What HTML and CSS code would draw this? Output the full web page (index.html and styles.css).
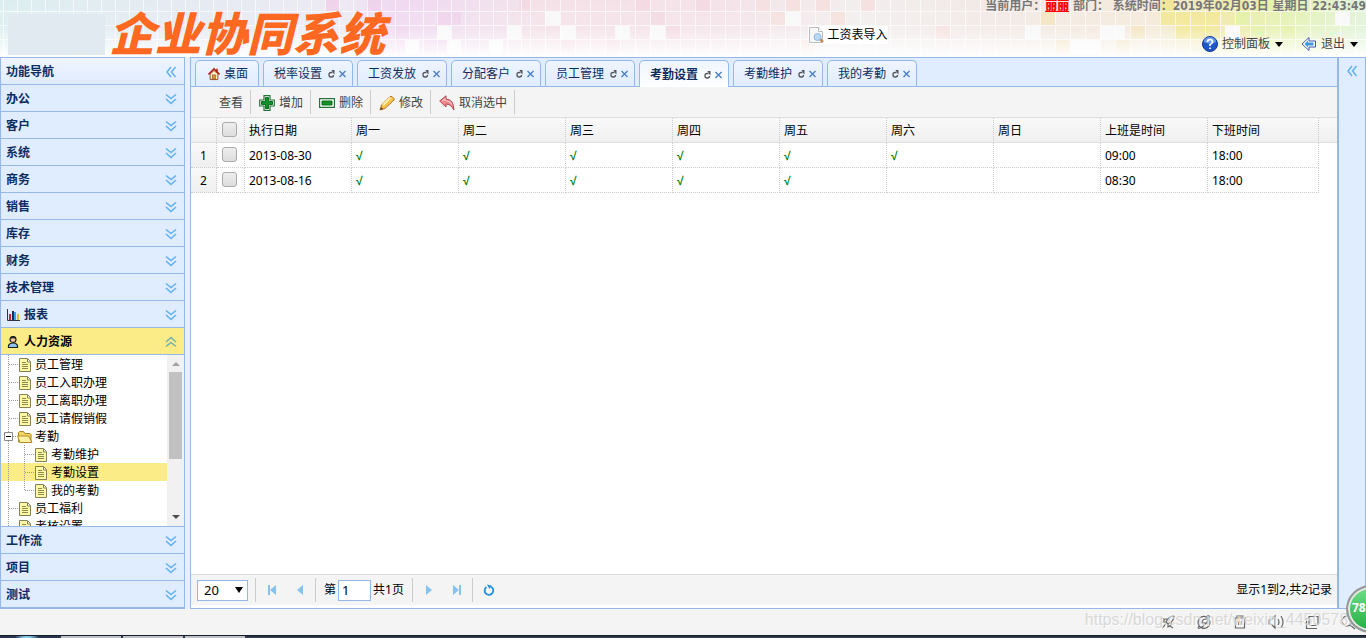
FILE: index.html
```html
<!DOCTYPE html>
<html lang="zh-CN">
<head>
<meta charset="utf-8">
<title>企业协同系统</title>
<link rel="stylesheet" href="styles.css">
</head>
<body>
<svg class="defs" aria-hidden="true">
  <symbol id="down" viewBox="0 0 12 12"><path d="M1 1.5l5 4 5-4M1 6l5 4.5L11 6" fill="none" stroke="#62b2ee" stroke-width="1.6"/></symbol>
  <symbol id="up" viewBox="0 0 12 12"><path d="M1 6l5-4.5L11 6M1 10.500l5-4 5 4" fill="none" stroke="#7ab0a8" stroke-width="1.6"/></symbol>
  <symbol id="left" viewBox="0 0 12 12"><path d="M6 1L2 6l4 5M10.500 1l-4 5 4 5" fill="none" stroke="#62b2ee" stroke-width="1.5"/></symbol>
  <symbol id="doc" viewBox="0 0 12 14"><path d="M.5.5h8l3 3v10H.5z" fill="#fff9a5" stroke="#858159"/><path d="M8.500 1v3H11" fill="#fff" stroke="#858159"/><path d="M3 4.500h4M3 6.500h6M3 8.500h6M3 10.500h6" stroke="#8a8a51"/></symbol>
  <symbol id="reload" viewBox="0 0 7 8"><path d="M4.500 2.500H3Q1 2.500 1 4.500v.5q0 2 2 2h.5q2 0 2-2" fill="none" stroke="#555" stroke-width="1.300"/><path d="M3.500 0H6.500V4.500L5.500 3.500z" fill="#555"/></symbol>
  <symbol id="close" viewBox="0 0 7 8"><path d="M.5 1l6 6M6.500 1l-6 6" stroke="#4c7fc4" stroke-width="1.4"/></symbol>
</svg>

<header class="top">
  <svg class="mosaic" width="100%" height="57" aria-hidden="true">
    <defs>
      <linearGradient id="hue"><stop offset="0" stop-color="#dceef0"/><stop offset=".15" stop-color="#e6eaf2"/><stop offset=".25" stop-color="#eceaf4"/><stop offset=".29" stop-color="#f0d8f1"/><stop offset=".36" stop-color="#f1e1ed"/><stop offset=".4" stop-color="#f4e1e7"/><stop offset=".53" stop-color="#f4e3e8"/><stop offset=".63" stop-color="#f2eeee"/><stop offset=".72" stop-color="#f2e9e6"/><stop offset=".84" stop-color="#f4e9da"/><stop offset=".9" stop-color="#eeeaa8"/><stop offset=".94" stop-color="#e5f1b0"/><stop offset="1" stop-color="#e0f3d9"/></linearGradient>
      <linearGradient id="fade" x2="0" y2="1"><stop offset="0" stop-color="#fff" stop-opacity="0"/><stop offset=".5" stop-color="#fff" stop-opacity=".15"/><stop offset="1" stop-color="#fff" stop-opacity=".95"/></linearGradient>
      <pattern id="grid" x="3" y="11" width="14" height="14" patternUnits="userSpaceOnUse"><path d="M14 .5H.5V14" fill="none" stroke="#fff" stroke-opacity=".65"/></pattern>
      <pattern id="wide" x="5" y="11" width="15" height="14" patternUnits="userSpaceOnUse"><path d="M15 .5H.5V14" fill="none" stroke="#fff" stroke-opacity=".65"/></pattern>
    </defs>
    <rect width="100%" height="57" fill="url(#hue)"/>
    <g fill="#efd3ec"><path d="M325 0h14v11h-14zM367 0h14v11h-14zM395 26h14v13h-14zM437 12h24v13h-24zM367 40h14v13h-14zM423 40h24v14h-24z"/></g>
    <g fill="#f4d9e2"><path d="M519 0h11v11h-11zM635 0h15v11h-15zM650 12h15v13h-15zM695 0h15v11h-15zM665 26h15v13h-15zM605 40h15v14h-15zM560 40h15v14h-15z"/></g>
    <g fill="#f5e1df"><path d="M755 0h15v11h-15zM785 0h15v11h-15zM830 12h15v13h-15zM860 0h15v11h-15zM815 0h15v11h-15zM770 12h15v13h-15zM935 26h15v13h-15zM800 40h15v14h-15z"/></g>
    <g fill="#f3e3c0"><path d="M1040 12h15v13h-15zM1130 26h15v13h-15zM1055 40h15v14h-15zM1115 40h15v14h-15z"/></g>
    <g fill="#f1e696"><path d="M1160 0h15v25h-15zM1175 12h30v27h-30zM1205 12h15v27h-15z"/></g>
    <g fill="#e3f0a4"><path d="M1235 12h15v13h-15zM1250 26h15v13h-15zM1280 26h15v13h-15z"/></g>
    <path fill="#f8f8f8" d="M437 26h14v13h-14zM507 26h14v13h-14zM545 12h15v13h-15zM560 26h15v13h-15zM615 26h15v13h-15zM650 26h15v13h-15zM785 12h15v13h-15zM405 40h14v14h-14zM447 40h14v14h-14zM489 40h14v14h-14zM1025 26h15v13h-15zM1100 26h25v13h-25zM1225 26h15v13h-15zM1335 12h15v13h-15zM1070 40h30v14h-30z"/>
    <rect width="525" height="57" fill="url(#grid)"/><rect x="525" width="100%" height="57" fill="url(#wide)"/>
    <rect width="100%" height="57" fill="url(#fade)"/>
  </svg>
  <div class="brand"><span class="logo-block"></span><h1>企业协同系统</h1></div>
  <a class="import" href="#"><svg width="16" height="16" viewBox="0 0 16 16"><path d="M1.500.5h9l4 4v11h-13z" fill="#f7f7f7" stroke="#bbb"/><path d="M10.500.5v4h4" fill="#fff" stroke="#bbb"/><path d="M12 12l3 3" stroke="#c58a52" stroke-width="2.500"/><circle cx="9.500" cy="10" r="3.500" fill="#b8d9f8" stroke="#90b5df"/></svg>工资表导入</a>
  <div class="account">
    <p>当前用户：<b class="user">丽丽</b> 部门： 系统时间：2019年02月03日 星期日 22:43:49</p>
    <nav>
      <button><svg width="16" height="16" viewBox="0 0 16 16"><circle cx="8" cy="8" r="7.500" fill="#2057c8" stroke="#123a91"/><path d="M2 6a6 5 0 0 1 12 0Q8 9 2 6" fill="#6a9bed"/><path d="M5.500 6q0-2.500 2.500-2.500T10.500 6Q10.500 7.500 8 8.500V10M8 11.500v1.500" fill="none" stroke="#fff" stroke-width="1.700"/></svg>控制面板<i class="caret"></i></button>
      <button><svg width="16" height="16" viewBox="0 0 16 16"><path d="M1 8l7-6.500V5h6.500v6H8v3.500z" fill="#fff" stroke="#4057b0"/><path d="M3.500 8L7 4.500v2h5.500v3H7v2z" fill="#3f95e8"/></svg>退出<i class="caret"></i></button>
    </nav>
  </div>
</header>

<main class="work">
  <aside class="side">
    <h2 class="title">功能导航<svg><use href="#left"/></svg></h2>
    <button>办公<svg><use href="#down"/></svg></button>
    <button>客户<svg><use href="#down"/></svg></button>
    <button>系统<svg><use href="#down"/></svg></button>
    <button>商务<svg><use href="#down"/></svg></button>
    <button>销售<svg><use href="#down"/></svg></button>
    <button>库存<svg><use href="#down"/></svg></button>
    <button>财务<svg><use href="#down"/></svg></button>
    <button>技术管理<svg><use href="#down"/></svg></button>
    <button><span class="with-icon"><svg class="lead" viewBox="0 0 14 14"><path d="M1.500 1v11.500H14" fill="none" stroke="#334"/><path d="M3 6h2v6H3z" fill="#d51f2c"/><path d="M6 3h2v9H6z" fill="#222b66"/><path d="M8 4h2v8H8z" fill="#38a2e9"/><path d="M11 6h2v6h-2z" fill="#e5b72e"/></svg>报表</span><svg><use href="#down"/></svg></button>
    <button class="open"><span class="with-icon"><svg class="lead" viewBox="0 0 14 14"><path d="M2.500 12.500V10.500q1-2.500 4.500-2.500t4.500 2.500v2z" fill="#8ec5ee" stroke="#222" stroke-width="1.200"/><circle cx="7" cy="4.500" r="3" fill="#f4c9a4" stroke="#222" stroke-width="1.200"/><path d="M4 4q0-3 3-3t3 3Q7 2.500 4 4" fill="#222"/></svg>人力资源</span><svg><use href="#up"/></svg></button>
    <div class="tree-box">
      <ul class="tree">
        <li><svg><use href="#doc"/></svg>员工管理</li>
        <li><svg><use href="#doc"/></svg>员工入职办理</li>
        <li><svg><use href="#doc"/></svg>员工离职办理</li>
        <li><svg><use href="#doc"/></svg>员工请假销假</li>
        <li class="folder"><svg class="minus" viewBox="0 0 9 9"><path d="M.5.5h8v8h-8z" fill="#fff" stroke="#888"/><path d="M2 4.500h5" stroke="#000"/></svg><svg class="dir" viewBox="0 0 16 14"><path d="M1.500 12V2.500l1-1h4l1.500 2h5l1 1V12z" fill="#f3d45e" stroke="#a98424"/><path d="M.5 6h11l3.500 6.500H3z" fill="#fff0a0" stroke="#b28b2a"/></svg>考勤</li>
        <li class="child"><svg><use href="#doc"/></svg>考勤维护</li>
        <li class="child chosen"><svg><use href="#doc"/></svg>考勤设置</li>
        <li class="child last"><svg><use href="#doc"/></svg>我的考勤</li>
        <li><svg><use href="#doc"/></svg>员工福利</li>
        <li><svg><use href="#doc"/></svg>考核设置</li>
      </ul>
      <div class="scroll"><i class="arrow-up"></i><i class="thumb"></i><i class="arrow-down"></i></div>
    </div>
    <button>工作流<svg><use href="#down"/></svg></button>
    <button>项目<svg><use href="#down"/></svg></button>
    <button>测试<svg><use href="#down"/></svg></button>
  </aside>

  <section class="center">
    <nav class="tabs">
      <button class="home"><svg class="house" viewBox="0 0 14 14"><path d="M2.500 7v6.500h9V7L7 3z" fill="#fff5cf" stroke="#8b3a1c"/><path d="M.5 7.500L7 1l6.500 6.500M10.500 1v3" fill="none" stroke="#b32415" stroke-width="1.800"/><path d="M5 8h4v5H5z" fill="#d99530" stroke="#794216" stroke-width=".6"/></svg>桌面</button>
      <button>税率设置<svg><use href="#reload"/></svg><svg><use href="#close"/></svg></button>
      <button>工资发放<svg><use href="#reload"/></svg><svg><use href="#close"/></svg></button>
      <button>分配客户<svg><use href="#reload"/></svg><svg><use href="#close"/></svg></button>
      <button>员工管理<svg><use href="#reload"/></svg><svg><use href="#close"/></svg></button>
      <button class="active">考勤设置<svg><use href="#reload"/></svg><svg><use href="#close"/></svg></button>
      <button>考勤维护<svg><use href="#reload"/></svg><svg><use href="#close"/></svg></button>
      <button>我的考勤<svg><use href="#reload"/></svg><svg><use href="#close"/></svg></button>
    </nav>
    <div class="tools">
      <button class="view">查看</button>
      <button><svg viewBox="0 0 16 16"><path d="M5 .7h6v4.300h4.300v6H11v4.300H5V11H.7V5H5z" fill="#fff" stroke="#26733a" stroke-width="1.200"/><path d="M6.500 2.500h3v4h4v3h-4v4h-3v-4h-4v-3h4z" fill="#16902b" stroke="#087018"/></svg>增加</button>
      <button><svg viewBox="0 0 16 16"><path d="M.6 3.600h14.800v8.800H.6z" fill="#fff" stroke="#26733a" stroke-width="1.200"/><path d="M3 6h10v4H3z" fill="#16902b" stroke="#087018"/></svg>删除</button>
      <button><svg viewBox="0 0 16 16"><path d="M1 15l1.500-5L11 1.500q2-1 4 2V5L6 13.500z" fill="#fbc34d" stroke="#b97824"/><path d="M4 10l7.500-7.500" stroke="#fff2ae" stroke-width="2"/><path d="M1 15l1-3 2.500 2z" fill="#6b4930"/></svg>修改</button>
      <button><svg viewBox="0 0 16 16"><path d="M.7 6L7 .8V4q8 .5 7.800 11Q12 9 7 9v3z" fill="#f0858a" stroke="#b3474d"/><path d="M3 6l3-2v1.500q5 .5 7 4" fill="none" stroke="#fbc5c6" stroke-width="1.200"/></svg>取消选中</button>
    </div>
    <div class="grid-area">
      <table>
        <colgroup><col class="c-num"><col class="c-check"><col class="c-day"><col class="c-day"><col class="c-day"><col class="c-day"><col class="c-day"><col class="c-day"><col class="c-day"><col class="c-day"><col class="c-day"><col class="c-end"><col></colgroup>
        <thead><tr><th></th><th><input type="checkbox" aria-label="全选"></th><th>执行日期</th><th>周一</th><th>周二</th><th>周三</th><th>周四</th><th>周五</th><th>周六</th><th>周日</th><th>上班是时间</th><th>下班时间</th><th></th></tr></thead>
        <tbody>
          <tr><td>1</td><td><input type="checkbox" aria-label="选择第1行"></td><td>2013-08-30</td><td class="ok">√</td><td class="ok">√</td><td class="ok">√</td><td class="ok">√</td><td class="ok">√</td><td class="ok">√</td><td></td><td>09:00</td><td>18:00</td><td></td></tr>
          <tr><td>2</td><td><input type="checkbox" aria-label="选择第2行"></td><td>2013-08-16</td><td class="ok">√</td><td class="ok">√</td><td class="ok">√</td><td class="ok">√</td><td class="ok">√</td><td></td><td></td><td>08:30</td><td>18:00</td><td></td></tr>
        </tbody>
      </table>
    </div>
    <div class="pager">
      <span class="size"><select aria-label="每页条数"><option>20</option></select></span>
      <i class="sep"></i>
      <button aria-label="首页"><svg viewBox="0 0 10 10"><path d="M1 0h2v10H1zM9 0v10L3 5z"/></svg></button>
      <button aria-label="上一页"><svg viewBox="0 0 10 10"><path d="M8 0v10L2 5z"/></svg></button>
      <i class="sep"></i>
      <label class="page">第<input type="text" value="1">共1页</label>
      <i class="sep"></i>
      <button aria-label="下一页"><svg viewBox="0 0 10 10"><path d="M2 0v10l6-5z"/></svg></button>
      <button aria-label="末页"><svg viewBox="0 0 10 10"><path d="M7 0h2v10H7zM1 0v10l6-5z"/></svg></button>
      <i class="sep"></i>
      <button aria-label="刷新"><svg class="refresh" viewBox="0 0 12 12"><path d="M7.500 2.500a4.300 4.300 0 1 1-4 .5" fill="none" stroke="#2090dc" stroke-width="1.800"/><path d="M4 .5l4.500 1L6.500 5z" fill="#2090dc"/></svg></button>
      <span class="count">显示1到2,共2记录</span>
    </div>
  </section>
  <aside class="east"><svg><use href="#left"/></svg></aside>
</main>

<footer class="status">
  <svg viewBox="0 0 16 16"><path d="M14 2q-5 0-8 6l2 2q6-3 6-8M6 8H3l2-3h3M8 10v3l3-2V8M2 14l4-4M2 4l3 2M10 12l3 2"/></svg>
  <svg viewBox="0 0 16 16"><path d="M13 5a6 6 0 1 0 1 4H6q0-4 4-4t4 4M3 12q-2 3 1 2 5-2 9-9 2-4-2-3"/></svg>
  <svg viewBox="0 0 16 16"><path d="M2 4h12M5 4V2h6v2M3.500 4v10h9V4M6.500 7v4M9.500 7v4"/></svg>
  <svg viewBox="0 0 16 16"><path d="M1 6h2l4-4v12l-4-4H1zM10 5q2 3 0 6M13 2q4 6 0 12"/></svg>
  <svg viewBox="0 0 16 16"><path d="M5 2.500h9v9H5zM2.500 4v10.500H13"/></svg>
  <svg viewBox="0 0 16 16"><circle cx="7" cy="7" r="5"/><path d="M10 11l5 4"/></svg>
</footer>
<div class="taskbar"><i class="start"></i><i></i><i></i><i></i></div>
<div class="watermark">https://blog.csdn.net/weixin_44505789</div>
<div class="badge">78</div>
</body>
</html>
```
FILE: styles.css
```css
* { box-sizing: border-box; }
body { margin: 0; height: 100vh; display: flex; flex-direction: column; position: relative; overflow: hidden; background: #e6f0ff; color: #000; font: 12px/18px "Noto Sans", "Noto Sans CJK SC", sans-serif; }
button, input, select { font: inherit; color: inherit; margin: 0; }
button { border: 0; background: none; padding: 0; }
.defs { position: absolute; width: 0; height: 0; }

.top { position: relative; flex: none; height: 57px; display: grid; grid-template-columns: 1fr auto 1fr; overflow: hidden; }
.mosaic { position: absolute; left: 0; top: 0; }
.brand, .import, .account { position: relative; }
.brand { display: flex; align-items: center; gap: 4px; padding: 4px 0 0 8px; }
.logo-block { width: 97px; height: 41px; background: #e2eaf1; }
.brand h1 { margin: 0; padding-bottom: 6px; font: italic 900 46px/54px "Noto Sans CJK SC", sans-serif; color: #ff6820; white-space: nowrap; }
.import { grid-column: 2; align-self: start; margin-top: 26px; margin-left: 330px; display: flex; align-items: center; gap: 3px; background: #fff; color: #000; text-decoration: none; }
.account { display: flex; flex-direction: column; align-items: flex-end; }
.account p { margin: -3px 0 0; color: #777; font-family: "DejaVu Sans Condensed", "Noto Sans CJK SC", sans-serif; font-weight: bold; white-space: nowrap; }
.user { color: #f00; text-decoration: underline; }
.account nav { display: flex; gap: 18px; padding: 20px 8px 0 0; }
.account button { display: flex; align-items: center; gap: 4px; color: #444; }
.caret { width: 0; height: 0; margin-left: 1px; border: 4px solid transparent; border-top: 5px solid #000; border-bottom: 0; }

.work { flex: 1; min-height: 0; display: flex; }
.side { flex: none; width: 185px; margin-right: 5px; display: flex; flex-direction: column; border: 1px solid #95b8e7; border-bottom-width: 2px; background: #e0ecff; }
.side > button, .title { flex: none; height: 27px; display: flex; justify-content: space-between; align-items: center; padding: 1px 7px 0 5px; border-bottom: 1px solid #95b8e7; color: #0e2d5f; font-size: 12px; font-weight: bold; line-height: 18px; }
.side > button > svg, .title > svg { width: 12px; height: 12px; }
.title { margin: 0; background: linear-gradient(#eff5ff, #e0ecff); }
.side > .open { background: #fbec88; color: #000; }
.with-icon { display: flex; align-items: center; gap: 4px; }
.lead { width: 14px; height: 14px; }
.tree-box ~ button { border-top: 1px solid #95b8e7; border-bottom: 0; }
.tree-box { flex: 1; min-height: 0; display: flex; overflow: hidden; background: #fff; }
.tree { flex: 1; margin: 0; padding: 0; list-style: none; }
.tree li { height: 18px; display: flex; align-items: center; gap: 4px; padding: 1px 0 0 18px; white-space: nowrap; background: repeating-linear-gradient(#999 0 1px, transparent 1px 2px) 7px 0 / 1px 18px no-repeat, repeating-linear-gradient(90deg, #999 0 1px, transparent 1px 2px) 8px 9px / 9px 1px no-repeat; }
.tree svg { width: 12px; height: 14px; }
.tree .folder { gap: 2px; padding-left: 3px; }
.tree .minus { width: 9px; height: 9px; margin-right: 2px; }
.tree .dir { width: 16px; }
.tree .child { padding-left: 34px; background: repeating-linear-gradient(#999 0 1px, transparent 1px 2px) 7px 0 / 1px 18px no-repeat, repeating-linear-gradient(#999 0 1px, transparent 1px 2px) 23px 0 / 1px 18px no-repeat, repeating-linear-gradient(90deg, #999 0 1px, transparent 1px 2px) 24px 9px / 9px 1px no-repeat; }
.tree .last { background-size: 1px 18px, 1px 9px, 9px 1px; }
.tree .chosen { background-color: #fbec88; }
.scroll { width: 17px; display: flex; flex-direction: column; align-items: center; background: #f1f1f1; }
.arrow-up { margin: 7px 0 6px; border: 4px solid transparent; border-top: 0; border-bottom-color: #a3a3a3; }
.thumb { width: 13px; height: 87px; background: #c1c1c1; }
.arrow-down { margin: auto 0 7px; border: 4px solid transparent; border-bottom: 0; border-top-color: #505050; }

.center { flex: 1; min-width: 0; display: flex; flex-direction: column; border: 1px solid #95b8e7; background: #fff; }
.tabs { flex: none; height: 29px; display: flex; align-items: flex-end; gap: 4px; padding: 0 4px; background: #e0ecff; border-bottom: 1px solid #95b8e7; }
.tabs button { height: 26px; display: flex; align-items: center; gap: 4px; padding: 1px 6px 0 10px; border: 1px solid #95b8e7; border-bottom: 0; border-radius: 5px 5px 0 0; background: linear-gradient(#eff5ff, #e0ecff); color: #0e2d5f; white-space: nowrap; }
.tabs svg { width: 7px; height: 8px; }
.tabs svg:first-of-type { margin-left: 2px; }
.tabs .home { padding-right: 10px; }
.tabs .house { width: 12px; height: 14px; margin: 0; }
.tabs .active { height: 27px; margin-bottom: -1px; background: linear-gradient(#eff5ff, #fff); font-weight: bold; }
.tools { flex: none; height: 31px; display: flex; align-items: center; background: #f4f4f4; border-bottom: 1px solid #ddd; }
.tools button { height: 24px; display: flex; align-items: center; gap: 4px; padding: 1px 7px 0 8px; border-right: 1px solid #ccc; color: #444; }
.tools .view { padding-left: 28px; }
.tools svg { width: 16px; height: 16px; }

.grid-area { flex: 1; min-height: 0; overflow: hidden; }
table { width: 100%; table-layout: fixed; border-collapse: separate; border-spacing: 0; }
.c-num { width: 26px; }
.c-check { width: 28px; }
.c-day { width: 107px; }
.c-end { width: 111px; }
th, td { height: 25px; padding: 2px 0 0 4px; border: dotted #ccc; border-width: 0 1px 1px 0; text-align: left; font-weight: normal; white-space: nowrap; }
th { background: linear-gradient(#f9f9f9, #efefef); border-bottom: 1px solid #ddd; }
th:last-child { border-right: 0; }
td:last-child { border: 0; }
td:first-child { padding: 2px 0 0; text-align: center; background: linear-gradient(#f9f9f9, #efefef); }
.ok { color: #008000; font-family: "Liberation Sans", sans-serif; font-weight: bold; }
table input { appearance: none; display: block; width: 15px; height: 15px; margin: -4px 0 0 1px; border: 1px solid #aaa; border-radius: 3px; background: linear-gradient(#eee, #ddd); }

.pager { flex: none; height: 34px; display: flex; align-items: center; padding: 0 5px 0 6px; border-top: 1px solid #ddd; border-bottom: 3px solid #fff; background: #f4f4f4; }
.size { position: relative; width: 51px; margin-right: 7px; }
.size::after { content: ""; position: absolute; right: 5px; top: 7px; border: 4px solid transparent; border-top: 6px solid #000; border-bottom: 0; }
.size select { appearance: none; display: block; width: 100%; height: 21px; padding: 0 6px; border: 1px solid #95b8e7; background: #fff; font-size: 13px; }
.sep { width: 1px; height: 24px; background: #ccc; }
.pager button { width: 28px; display: flex; justify-content: center; }
.pager .sep + button { margin-left: 2px; }
.pager button + .sep { margin-left: 1px; }
.pager svg { width: 10px; height: 10px; fill: #86c2ec; }
.pager .refresh { width: 12px; height: 12px; }
.page { display: flex; align-items: center; gap: 2px; padding: 0 8px; }
.page input { width: 33px; height: 21px; padding: 0 3px; border: 1px solid #95b8e7; background: #fff; font-size: 13px; }
.count { margin-left: auto; }
.east { flex: none; width: 28px; padding: 7px; border: 1px solid #95b8e7; background: #e0ecff; }
.east svg { display: block; width: 12px; height: 12px; }

.status { flex: none; height: 26px; display: flex; justify-content: flex-end; align-items: center; gap: 20px; padding-right: 10px; background: #f4f4f4; }
.status svg { width: 16px; height: 16px; fill: none; stroke: #666; stroke-width: 1.2; }
.taskbar { flex: none; height: 3px; display: flex; gap: 2px; background: linear-gradient(#10151e, #3b4c60); }
.taskbar i { width: 60px; margin-top: 1px; background: #bfc1c8; }
.taskbar .start { background: radial-gradient(circle at 27px 6px, #8bd2f1 0 5px, #26364e 13px); width: 59px; }
.watermark { position: absolute; right: 9px; bottom: 8px; color: #d2d2d2; opacity: .8; text-shadow: 1px 1px #fff; font: 16px/20px "Liberation Sans", sans-serif; }
.badge { position: absolute; right: -30px; bottom: 5px; width: 50px; height: 48px; padding-left: 4px; border: 2px solid #999; border-radius: 50%; box-shadow: inset 0 0 0 2px #e8e8e8; background: linear-gradient(#70df88, #23ad42); color: #fff; font-weight: bold; line-height: 42px; }
```
